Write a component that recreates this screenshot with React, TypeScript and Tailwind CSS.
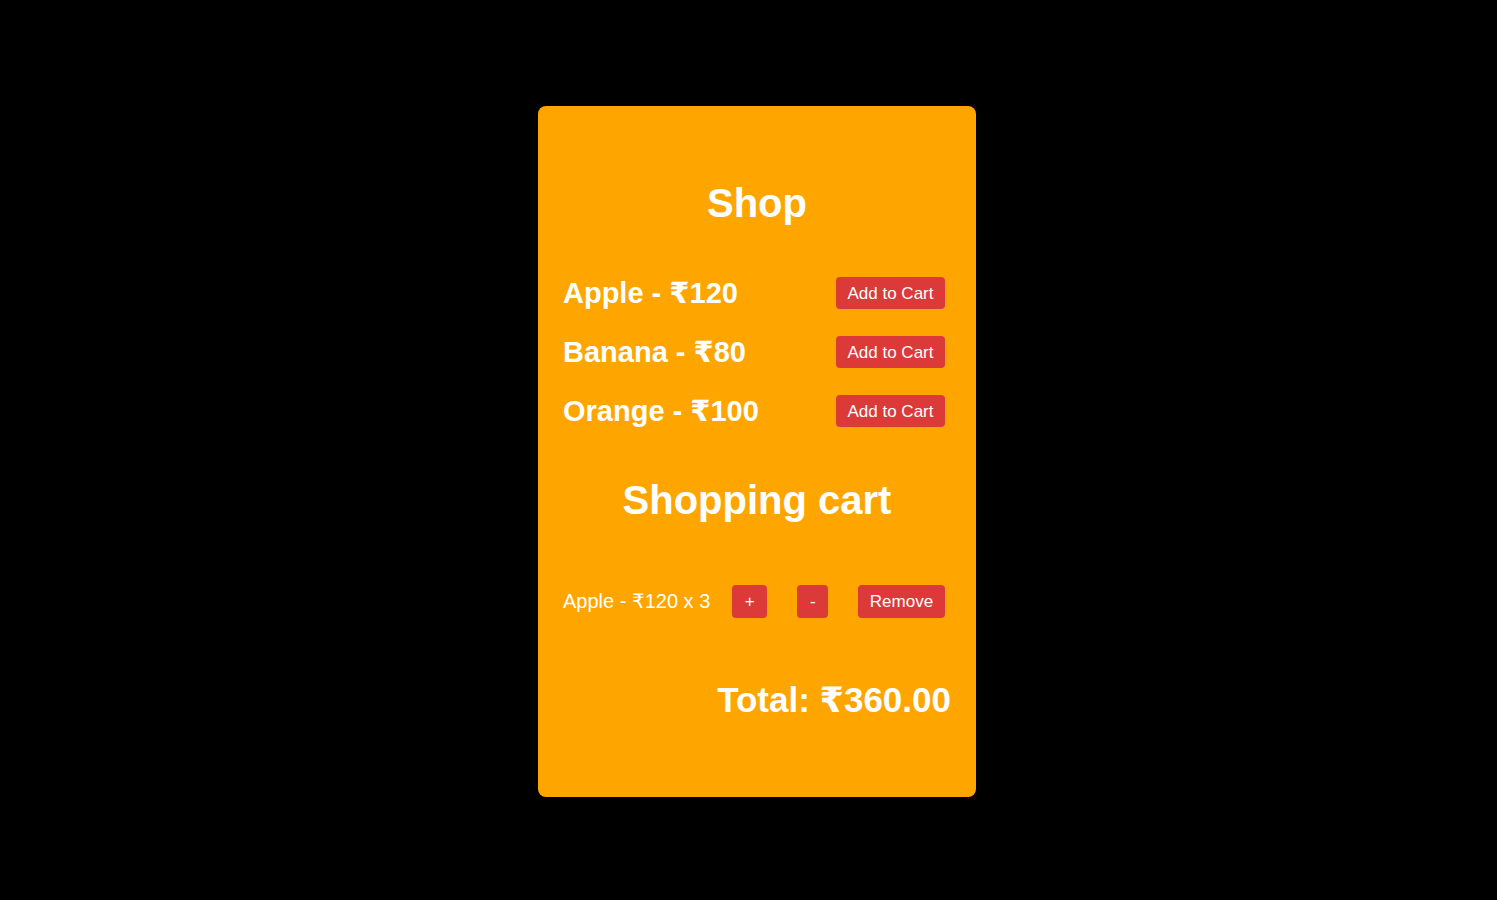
import { useState } from "react";

type Product = { name: string; price: number };

const products: Product[] = [
  { name: "Apple", price: 120 },
  { name: "Banana", price: 80 },
  { name: "Orange", price: 100 },
];

const btn =
  "bg-[#dc3939] text-white text-[17px] leading-[19px] py-[7px] rounded-[4px]";

export default function App() {
  const [cart, setCart] = useState<{ product: Product; qty: number }[]>([
    { product: products[0], qty: 3 },
  ]);

  const add = (p: Product) =>
    setCart((c) => {
      const found = c.find((i) => i.product.name === p.name);
      if (found)
        return c.map((i) =>
          i.product.name === p.name ? { ...i, qty: i.qty + 1 } : i
        );
      return [...c, { product: p, qty: 1 }];
    });

  const change = (name: string, d: number) =>
    setCart((c) =>
      c
        .map((i) => (i.product.name === name ? { ...i, qty: i.qty + d } : i))
        .filter((i) => i.qty > 0)
    );

  const total = cart.reduce((s, i) => s + i.product.price * i.qty, 0);

  return (
    <div
      className="min-h-screen bg-black flex justify-center items-start pt-[106px] pl-[17px]"
      style={{ fontFamily: '"Liberation Sans", Arial, "DejaVu Sans", sans-serif' }}
    >
      <div className="w-[438px] bg-[#ffa500] rounded-[8px] shadow-lg pt-[74px] pb-[77px] px-[25px] text-white">
        <h1 className="text-[40px] leading-[46px] font-bold text-center">Shop</h1>

        <div className="mt-[47px] mr-[6px] flex flex-col gap-[19px]">
          {products.map((p) => (
            <div key={p.name} className="h-[40px] flex items-center justify-between">
              <span className="text-[29px] leading-[34px] font-bold">
                {p.name} - ₹{p.price}
              </span>
              <button className={`${btn} w-[109px] h-[32px]`} onClick={() => add(p)}>
                Add to Cart
              </button>
            </div>
          ))}
        </div>

        <h2 className="mt-[46px] text-[40px] leading-[46px] font-bold text-center">
          Shopping cart
        </h2>

        <div className="mt-[62px] mr-[6px] flex flex-col gap-4">
          {cart.map((i) => (
            <div key={i.product.name} className="h-[33px] flex items-center">
              <span className="text-[20px] leading-[23px]">
                {i.product.name} - ₹{i.product.price} x {i.qty}
              </span>
              <button className={`${btn} ml-[22px] w-[35px]`} onClick={() => change(i.product.name, 1)}>
                +
              </button>
              <button className={`${btn} ml-[30px] w-[31px]`} onClick={() => change(i.product.name, -1)}>
                -
              </button>
              <button
                className={`${btn} ml-auto w-[87px]`}
                onClick={() => change(i.product.name, -i.qty)}
              >
                Remove
              </button>
            </div>
          ))}
        </div>

        <div className="mt-[62px] text-right text-[35px] leading-[40px] font-bold">
          Total: ₹{total.toFixed(2)}
        </div>
      </div>
    </div>
  );
}
